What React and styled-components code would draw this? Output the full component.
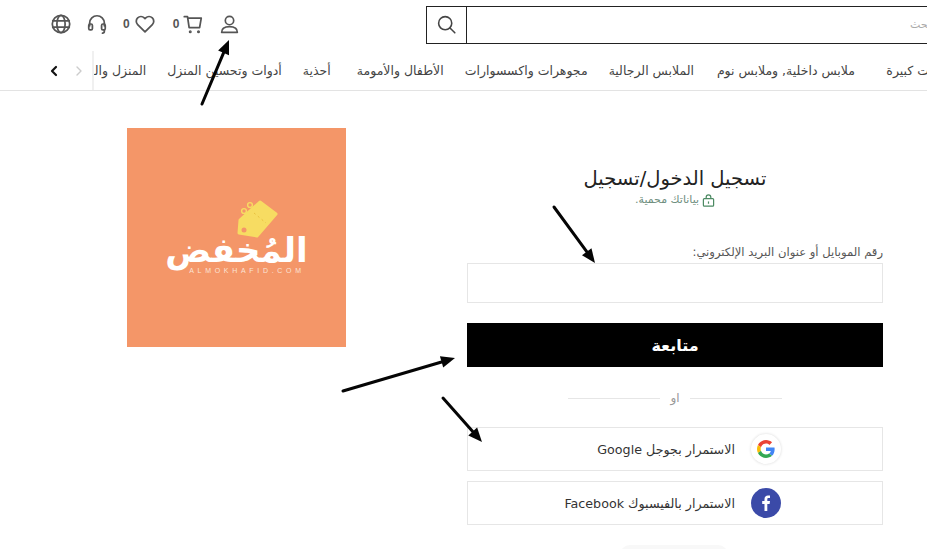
import React from "react";
import styled, { createGlobalStyle } from "styled-components";

const Global = createGlobalStyle`
  html, body { margin: 0; padding: 0; background: #fff; }
  body { font-family: "DejaVu Sans", "Noto Sans", sans-serif; color: #333; }
`;

const Page = styled.div`
  position: relative;
  width: 927px;
  height: 549px;
  overflow: hidden;
  background: #fff;
`;

const TopBar = styled.header`
  display: flex;
  justify-content: space-between;
  align-items: center;
  height: 48px;
  padding: 0 0 0 50px;
`;

const IconGroup = styled.div`
  display: flex;
  align-items: center;
  height: 38px;
`;

const IconSlot = styled.span`
  display: flex;
  align-items: center;
  justify-content: center;
  width: ${(p) => p.$w}px;
  margin-left: ${(p) => p.$gap || 0}px;
  color: #555;
`;

const Count = styled.span`
  font: 700 12px "Liberation Sans", sans-serif;
  color: #555;
  margin-left: ${(p) => p.$gap || 0}px;
`;

const Search = styled.div`
  display: flex;
  height: 38px;
  width: 530px;
  margin-right: -29px;
  box-sizing: border-box;
  border: 1px solid #222;
  margin-top: 1px;
`;

const SearchBtn = styled.div`
  flex: 0 0 39px;
  display: flex;
  align-items: center;
  justify-content: center;
  border-right: 1px solid #222;
  color: #444;
`;

const SearchText = styled.div`
  flex: 1;
  direction: rtl;
  display: flex;
  align-items: center;
  padding-right: 21px;
  font-size: 11px;
  color: #aaa;
`;

const Nav = styled.nav`
  display: flex;
  align-items: flex-end;
  height: 43px;
  box-sizing: border-box;
  border-bottom: 1px solid #e3e3e3;
  padding-left: 50px;
`;

const Arrows = styled.div`
  flex: 0 0 42px;
  display: flex;
  align-items: center;
  gap: 17px;
  height: 39px;
`;

const Track = styled.div`
  flex: 1;
  min-width: 0;
  display: flex;
  direction: rtl;
  align-items: center;
  overflow: hidden;
  border-left: 2px solid #f0f0f0;
  height: 39px;
`;

const NavItem = styled.span`
  flex: 0 0 ${(p) => p.$w}px;
  margin-left: 21px;
  margin-right: ${(p) => p.$mr || 0}px;
  font-size: 12.5px;
  color: #444;
  white-space: nowrap;
  text-align: start;
`;

const Main = styled.main`
  display: flex;
  align-items: flex-start;
  padding-left: 127px;
`;

const Logo = styled.div`
  flex: 0 0 219px;
  height: 219px;
  margin-top: 37px;
  background: #f49668;
  position: relative;
  display: flex;
  flex-direction: column;
  align-items: center;
  padding-top: 105px;
  box-sizing: border-box;
`;

const LogoWord = styled.div`
  font: 700 34px/34px "DejaVu Sans", sans-serif;
  color: #fff;
  direction: rtl;
`;

const LogoSub = styled.div`
  font: 400 7px/8px "Liberation Sans", sans-serif;
  letter-spacing: 3.7px;
  color: #fbe3d6;
  padding-left: 21px;
`;

const TagMark = styled.svg`
  position: absolute;
  left: 105px;
  top: 71px;
`;

const Form = styled.section`
  flex: 0 0 416px;
  margin-left: 121px;
  direction: rtl;
  padding-top: 76px;
`;

const Title = styled.h1`
  margin: 0;
  text-align: center;
  font-size: 19.5px;
  line-height: 24px;
  font-weight: 400;
  color: #222;
`;

const Secure = styled.div`
  display: flex;
  align-items: center;
  justify-content: center;
  gap: 3px;
  margin-top: 1px;
  font-size: 11px;
  line-height: 16px;
  color: #6f8f80;
`;

const Label = styled.label`
  display: block;
  margin-top: 36px;
  font-size: 11.6px;
  line-height: 16px;
  color: #555;
`;

const Input = styled.div`
  height: 40px;
  box-sizing: border-box;
  margin-top: 3px;
  border: 1px solid #e6e6e6;
`;

const Submit = styled.button`
  display: block;
  width: 100%;
  height: 44px;
  margin-top: 20px;
  border: 0;
  background: #000;
  color: #fff;
  font: 700 16px "DejaVu Sans", sans-serif;
`;

const Divider = styled.div`
  display: flex;
  align-items: center;
  justify-content: center;
  gap: 10px;
  margin-top: 23px;
  height: 16px;
  font: 400 12px "DejaVu Sans", sans-serif;
  color: #999;
  &::before, &::after {
    content: "";
    width: 92px;
    height: 1px;
    background: #e6e6e6;
  }
`;

const Social = styled.div`
  display: flex;
  align-items: center;
  height: 44px;
  box-sizing: border-box;
  border: 1px solid #e6e6e6;
  margin-top: ${(p) => p.$mt}px;
  padding-right: 101px;
  gap: 16px;
  font-size: 12.7px;
  color: #333;
`;

const Badge = styled.span`
  width: 30px;
  height: 30px;
  border-radius: 50%;
  display: flex;
  align-items: center;
  justify-content: center;
  background: ${(p) => p.$bg};
  box-shadow: ${(p) => (p.$soft ? "0 0 3px rgba(0,0,0,.16)" : "none")};
`;

const Pill = styled.div`
  position: absolute;
  left: 620px;
  top: 545px;
  width: 108px;
  height: 20px;
  border-radius: 10px;
  background: #f8f8f8;
`;

const Overlay = styled.svg`
  position: absolute;
  inset: 0;
  pointer-events: none;
`;

const Stroke = ({ children, size = 22, sw = 1.9, vb = "0 0 24 24" }) => (
  <svg width={size} height={size} viewBox={vb} fill="none" stroke="currentColor" strokeWidth={sw} strokeLinecap="round" strokeLinejoin="round">
    {children}
  </svg>
);

const Arrow = ({ x1, y1, x2, y2, w = 3, head = 14 }) => {
  const a = Math.atan2(y2 - y1, x2 - x1);
  const bx = x2 - Math.cos(a) * head;
  const by = y2 - Math.sin(a) * head;
  const nx = -Math.sin(a) * head * 0.42;
  const ny = Math.cos(a) * head * 0.42;
  return (
    <g>
      <line x1={x1} y1={y1} x2={bx} y2={by} stroke="#050505" strokeWidth={w} strokeLinecap="round" />
      <polygon points={`${x2},${y2} ${bx + nx},${by + ny} ${bx - nx},${by - ny}`} fill="#050505" />
    </g>
  );
};

const items = [
  ["إلكترونيات كبيرة", 95, -44],
  ["ملابس داخلية, وملابس نوم", 140],
  ["الملابس الرجالية", 84],
  ["مجوهرات واكسسوارات", 122],
  ["الأطفال والأمومة", 92],
  ["أحذية", 28],
  ["أدوات وتحسين المنزل", 112],
  ["المنزل والمطبخ", 88],
];

export default function App() {
  return (
    <Page>
      <Global />
      <TopBar>
        <IconGroup>
          <IconSlot $w={22}>
            <Stroke>
              <circle cx="12" cy="12" r="9.5" />
              <ellipse cx="12" cy="12" rx="4.5" ry="9.5" />
              <path d="M3 8.500h18M3 15.500h18" />
            </Stroke>
          </IconSlot>
          <IconSlot $w={22} $gap={14}>
            <Stroke>
              <path d="M4 14v-3a8 8 0 0 1 16 0v3" />
              <rect x="3" y="12" width="4" height="6.500" rx="1.500" />
              <rect x="17" y="12" width="4" height="6.500" rx="1.500" />
              <path d="M20 18.500v1.500a2 2 0 0 1-2 2" />
            </Stroke>
          </IconSlot>
          <Count $gap={15}>0</Count>
          <IconSlot $w={22} $gap={4}>
            <Stroke>
              <path d="M12 20.500 4 12.600a5 5 0 0 1 0-7.200 5.200 5.200 0 0 1 7.200 0l.8.8.8-.8a5.200 5.200 0 0 1 7.200 0 5 5 0 0 1 0 7.200Z" />
            </Stroke>
          </IconSlot>
          <Count $gap={17}>0</Count>
          <IconSlot $w={22} $gap={3}>
            <Stroke>
              <path d="M2.500 4h3.500l1.800 12h11.400l1.800-10.500H6.300" />
              <circle cx="9" cy="20.500" r="0.7" fill="currentColor" />
              <circle cx="18" cy="20.500" r="0.7" fill="currentColor" />
            </Stroke>
          </IconSlot>
          <IconSlot $w={22} $gap={14}>
            <Stroke size={21}>
              <circle cx="12" cy="7.500" r="4.800" />
              <path d="M3 21c0-4.500 3.500-6.500 9-6.500s9 2 9 6.500Z" />
            </Stroke>
          </IconSlot>
        </IconGroup>
        <Search>
          <SearchBtn>
            <Stroke size={21} sw={1.8}>
              <circle cx="10.500" cy="10.500" r="7.500" />
              <path d="m16 16 5.500 5.500" />
            </Stroke>
          </SearchBtn>
          <SearchText>ابحث</SearchText>
        </Search>
      </TopBar>
      <Nav>
        <Arrows>
          <svg width="8" height="12" viewBox="0 0 8 12" fill="none" stroke="#111" strokeWidth="2.2" strokeLinecap="round" strokeLinejoin="round"><path d="M6 2 2 6l4 4" /></svg>
          <svg width="8" height="12" viewBox="0 0 8 12" fill="none" stroke="#ccc" strokeWidth="1.4" strokeLinecap="round" strokeLinejoin="round"><path d="m2 2 4 4-4 4" /></svg>
        </Arrows>
        <Track>
          {items.map(([t, w, mr]) => (
            <NavItem key={t} $w={w} $mr={mr}>{t}</NavItem>
          ))}
        </Track>
      </Nav>
      <Main>
        <Logo>
          <TagMark width="48" height="46" viewBox="0 0 48 46">
            <g fill="none" stroke="#f7dc62" strokeWidth="1.4">
              <circle cx="18" cy="6" r="2.400" />
              <circle cx="12" cy="12" r="2.400" />
            </g>
            <path d="M28 3 44 15 25 37 7 34 8 21Z" fill="#f7dc62" stroke="#f7dc62" strokeWidth="3" strokeLinejoin="round" />
            <circle cx="12" cy="31" r="2.500" fill="#f49668" />
            <path d="M22 14 34 24" stroke="#e9c03f" strokeWidth="1" strokeDasharray="2 3" />
          </TagMark>
          <LogoWord>المُخفض</LogoWord>
          <LogoSub>ALMOKHAFID.COM</LogoSub>
        </Logo>
        <Form>
          <Title>تسجيل الدخول/تسجيل</Title>
          <Secure>
            <svg width="13" height="13" viewBox="0 0 14 14" fill="none" stroke="#4c8a63" strokeWidth="1.3"><path d="M4.500 5V3.500a2.500 2.500 0 0 1 5 0V5" /><rect x="1.500" y="5" width="11" height="8" rx="1" /><path d="M7 8v2.500" /></svg>
            بياناتك محمية.
          </Secure>
          <Label>رقم الموبايل أو عنوان البريد الإلكتروني:</Label>
          <Input />
          <Submit>متابعة</Submit>
          <Divider>او</Divider>
          <Social $mt={21}>
            <Badge $bg="#fff" $soft>
              <svg width="18" height="18" viewBox="0 0 48 48">
                <path fill="#EA4335" d="M24 9.500c3.500 0 6.700 1.200 9.200 3.600l6.900-6.900C35.900 2.400 30.500 0 24 0 14.600 0 6.500 5.400 2.600 13.200l8 6.200C12.500 13.700 17.800 9.500 24 9.500z" />
                <path fill="#4285F4" d="M47 24.500c0-1.600-.1-3.100-.4-4.500H24v9h12.900c-.6 3-2.200 5.500-4.700 7.200l7.700 6C44.400 38.500 47 32 47 24.500z" />
                <path fill="#FBBC05" d="M10.500 28.600c-.5-1.400-.8-3-.8-4.600s.3-3.200.8-4.600l-8-6.200C.9 16.500 0 20.100 0 24s.9 7.500 2.600 10.800l7.900-6.200z" />
                <path fill="#34A853" d="M24 48c6.500 0 11.900-2.100 15.900-5.800l-7.700-6c-2.100 1.400-4.900 2.300-8.200 2.300-6.200 0-11.500-4.200-13.400-9.900l-8 6.200C6.500 42.600 14.600 48 24 48z" />
              </svg>
            </Badge>
            <span>الاستمرار بجوجل Google</span>
          </Social>
          <Social $mt={10}>
            <Badge $bg="#3b4aa8">
              <svg width="16" height="18" viewBox="0 0 16 18" fill="#fff"><path d="M9.300 17V9.900h2.300l.4-2.800H9.300V5.400c0-.8.3-1.300 1.400-1.300H12V1.600c-.3 0-1.100-.1-2-.1-2.100 0-3.500 1.300-3.500 3.600v2H4.200v2.800h2.300V17z" /></svg>
            </Badge>
            <span>الاستمرار بالفيسبوك Facebook</span>
          </Social>
        </Form>
      </Main>
      <Pill />
      <Overlay width="927" height="549" viewBox="0 0 927 549">
        <Arrow x1={202} y1={104} x2={229} y2={40} />
        <Arrow x1={554} y1={207} x2={595} y2={263} />
        <Arrow x1={343} y1={391} x2={455} y2={358} />
        <Arrow x1={443} y1={398} x2={482} y2={442} />
      </Overlay>
    </Page>
  );
}
